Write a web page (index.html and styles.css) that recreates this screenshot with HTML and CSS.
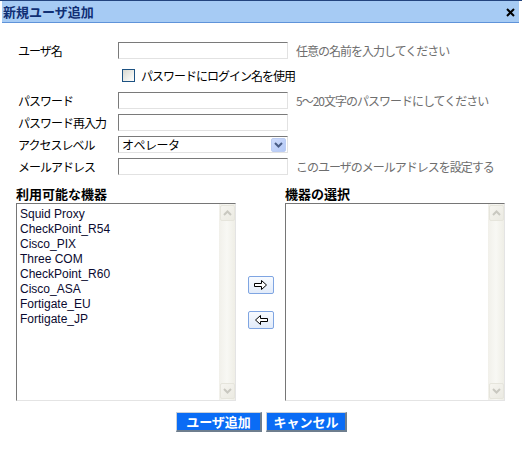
FILE: index.html
```html
<!DOCTYPE html>
<html lang="ja">
<head>
<meta charset="utf-8">
<title>新規ユーザ追加</title>
<link rel="stylesheet" href="styles.css">
</head>
<body>
<div class="dialog">
  <div class="titlebar">
    <span class="title">新規ユーザ追加</span>
    <svg class="close" width="9" height="9" viewBox="0 0 9 9"><path d="M1 1 L8 8 M8 1 L1 8" stroke="#000" stroke-width="2"/></svg>
  </div>

  <div class="form">
    <label class="lbl">ユーザ名</label>
    <input class="field" type="text">
    <span class="hint">任意の名前を入力してください</span>

    <div class="checkrow">
      <input class="check" type="checkbox">
      <span>パスワードにログイン名を使用</span>
    </div>

    <label class="lbl">パスワード</label>
    <input class="field" type="text">
    <span class="hint">5～20文字のパスワードにしてください</span>

    <label class="lbl">パスワード再入力</label>
    <input class="field" type="text">
    <span class="hint"></span>

    <label class="lbl">アクセスレベル</label>
    <div class="field select">
      <span class="seltext">オペレータ</span>
      <span class="drop"><svg width="9" height="6" viewBox="0 0 9 6"><path d="M1 1 L4.5 4.5 L8 1" fill="none" stroke="#4a5d86" stroke-width="2"/></svg></span>
    </div>
    <span class="hint"></span>

    <label class="lbl">メールアドレス</label>
    <input class="field" type="text">
    <span class="hint">このユーザのメールアドレスを設定する</span>
  </div>

  <div class="lists">
    <div class="listhead">利用可能な機器</div>
    <div></div>
    <div class="listhead">機器の選択</div>

    <div class="listbox">
      <ul class="items">
        <li>Squid Proxy</li>
        <li>CheckPoint_R54</li>
        <li>Cisco_PIX</li>
        <li>Three COM</li>
        <li>CheckPoint_R60</li>
        <li>Cisco_ASA</li>
        <li>Fortigate_EU</li>
        <li>Fortigate_JP</li>
      </ul>
      <div class="scroll">
        <span class="sbtn"><svg width="9" height="6" viewBox="0 0 9 6"><path d="M1 5 L4.5 1.5 L8 5" fill="none" stroke="#c9c8c0" stroke-width="2"/></svg></span>
        <span class="track"></span>
        <span class="sbtn"><svg width="9" height="6" viewBox="0 0 9 6"><path d="M1 1 L4.5 4.5 L8 1" fill="none" stroke="#c9c8c0" stroke-width="2"/></svg></span>
      </div>
    </div>

    <div class="movers">
      <button class="mover" type="button"><svg width="14" height="10" viewBox="0 0 14 10"><path d="M0.5 3.5 H7.5 V0.5 L12.5 5 L7.5 9.5 V6.5 H0.5 Z" fill="#fff" stroke="#000" stroke-width="1"/></svg></button>
      <button class="mover" type="button"><svg width="14" height="10" viewBox="0 0 14 10"><path d="M13.5 3.5 H6.5 V0.5 L1.5 5 L6.5 9.5 V6.5 H13.5 Z" fill="#fff" stroke="#000" stroke-width="1"/></svg></button>
    </div>

    <div class="listbox">
      <ul class="items"></ul>
      <div class="scroll">
        <span class="sbtn"><svg width="9" height="6" viewBox="0 0 9 6"><path d="M1 5 L4.5 1.5 L8 5" fill="none" stroke="#c9c8c0" stroke-width="2"/></svg></span>
        <span class="track"></span>
        <span class="sbtn"><svg width="9" height="6" viewBox="0 0 9 6"><path d="M1 1 L4.5 4.5 L8 1" fill="none" stroke="#c9c8c0" stroke-width="2"/></svg></span>
      </div>
    </div>
  </div>

  <div class="actions">
    <button class="act add" type="button">ユーザ追加</button>
    <button class="act cancel" type="button">キャンセル</button>
  </div>
</div>
</body>
</html>
```

FILE: styles.css
```css
html, body {
  margin: 0;
  padding: 0;
  background: #fff;
}

body {
  font-family: "Liberation Sans", "Noto Sans CJK JP", sans-serif;
  font-size: 12px;
  color: #000;
  width: 522px;
  height: 449px;
  overflow: hidden;
}

.dialog {
  border-top: 1px solid #23447e;
}

.titlebar {
  margin: 0 3px 0 2px;
  height: 21px;
  background: #a6cbf4;
  border-bottom: 1px solid #5f93d9;
  display: flex;
  align-items: center;
  justify-content: space-between;
  padding: 0 4px 0 1px;
}

.title {
  font-family: "Noto Sans CJK JP", sans-serif;
  font-weight: bold;
  font-size: 13px;
  color: #102f74;
}

.close {
  display: block;
  margin-top: 2px;
}

.form {
  display: grid;
  grid-template-columns: 100px 170px auto;
  grid-template-rows: 17px 23px 17px 17px 17px 17px;
  row-gap: 5px;
  padding: 19px 0 0 18px;
  align-items: center;
}

.lbl {
  font-family: "Noto Sans CJK JP", sans-serif;
  font-size: 12px;
  line-height: 17px;
  letter-spacing: -1px;
  white-space: nowrap;
}

.field {
  box-sizing: border-box;
  width: 170px;
  height: 17px;
  margin: 0;
  padding: 0 3px;
  border: 1px solid;
  border-color: #7a7a7a #e2e2e2 #e2e2e2 #7a7a7a;
  background: #fff;
  font: inherit;
}

.hint {
  padding-left: 8px;
  color: #6e6e6e;
  font-family: "Noto Sans CJK JP", sans-serif;
  font-size: 12px;
  letter-spacing: -1px;
  white-space: nowrap;
}

.checkrow {
  grid-column: 2 / span 2;
  align-self: stretch;
  display: flex;
  align-items: center;
  gap: 6px;
  padding-left: 4px;
  font-family: "Noto Sans CJK JP", sans-serif;
  font-size: 12px;
  letter-spacing: -1px;
  white-space: nowrap;
}

.check {
  appearance: none;
  -webkit-appearance: none;
  box-sizing: border-box;
  width: 13px;
  height: 13px;
  margin: 0;
  border: 1px solid #1d5282;
  background: linear-gradient(135deg, #d8d8d0 0%, #f4f4f0 70%, #ffffff 100%);
}

.select {
  display: flex;
  align-items: center;
  justify-content: space-between;
  padding: 0 1px 0 3px;
}

.seltext {
  font-family: "Noto Sans CJK JP", sans-serif;
  font-size: 12px;
  line-height: 15px;
  letter-spacing: -0.5px;
}

.drop {
  box-sizing: border-box;
  width: 15px;
  height: 14px;
  display: flex;
  align-items: center;
  justify-content: center;
  background: linear-gradient(135deg, #cfdcfc 0%, #b4c9f6 100%);
  border: 1px solid #bccdf3;
  border-radius: 2px;
}

.lists {
  margin-top: 10px;
  padding-left: 16px;
  display: grid;
  grid-template-columns: 220px 49px 220px;
  grid-template-rows: 18px 198px;
}

.listhead {
  font-family: "Noto Sans CJK JP", sans-serif;
  font-weight: bold;
  font-size: 13px;
  line-height: 18px;
  white-space: nowrap;
}

.listbox {
  box-sizing: border-box;
  border: 1px solid;
  border-color: #767676 #e4e4e4 #e4e4e4 #767676;
  display: flex;
  background: #fff;
}

.items {
  flex: 1;
  margin: 0;
  padding: 3px 0 0 3px;
  list-style: none;
}

.items li {
  font-family: "Liberation Sans", sans-serif;
  font-size: 12px;
  line-height: 15px;
  height: 15px;
  color: #0a0a30;
  white-space: nowrap;
}

.scroll {
  width: 16px;
  display: flex;
  flex-direction: column;
  background: linear-gradient(90deg, #f1f0ea 0%, #f8f8f4 50%, #efeee6 100%);
}

.sbtn {
  box-sizing: border-box;
  width: 15px;
  height: 16px;
  margin: 1px 0 1px 1px;
  border: 1px solid #e6e5dc;
  border-radius: 2px;
  background: linear-gradient(135deg, #f6f5f0 0%, #ebeae2 100%);
  display: flex;
  align-items: center;
  justify-content: center;
}

.track {
  flex: 1;
}

.movers {
  display: flex;
  flex-direction: column;
  align-items: center;
  gap: 17px;
  padding-top: 73px;
}

.mover {
  box-sizing: border-box;
  width: 26px;
  height: 18px;
  margin: 0;
  padding: 0;
  border: 1px solid #7fa5e2;
  border-radius: 2px;
  background: linear-gradient(180deg, #f8fbff 0%, #e2ebf9 100%);
  display: flex;
  align-items: center;
  justify-content: center;
}

.actions {
  margin-top: 11px;
  display: flex;
  justify-content: center;
  gap: 4px;
  padding-left: 1px;
}

.act {
  box-sizing: border-box;
  height: 20px;
  margin: 0;
  padding: 0;
  border-style: solid;
  border-width: 1px 2px 2px 1px;
  border-color: #c9d0d8 #6e7e8e #6e7e8e #c9d0d8;
  background: #0a6cf5;
  color: #fff;
  font-family: "Noto Sans CJK JP", sans-serif;
  font-weight: bold;
  font-size: 13px;
  line-height: 16px;
}

.add {
  width: 86px;
}

.cancel {
  width: 81px;
}
```
